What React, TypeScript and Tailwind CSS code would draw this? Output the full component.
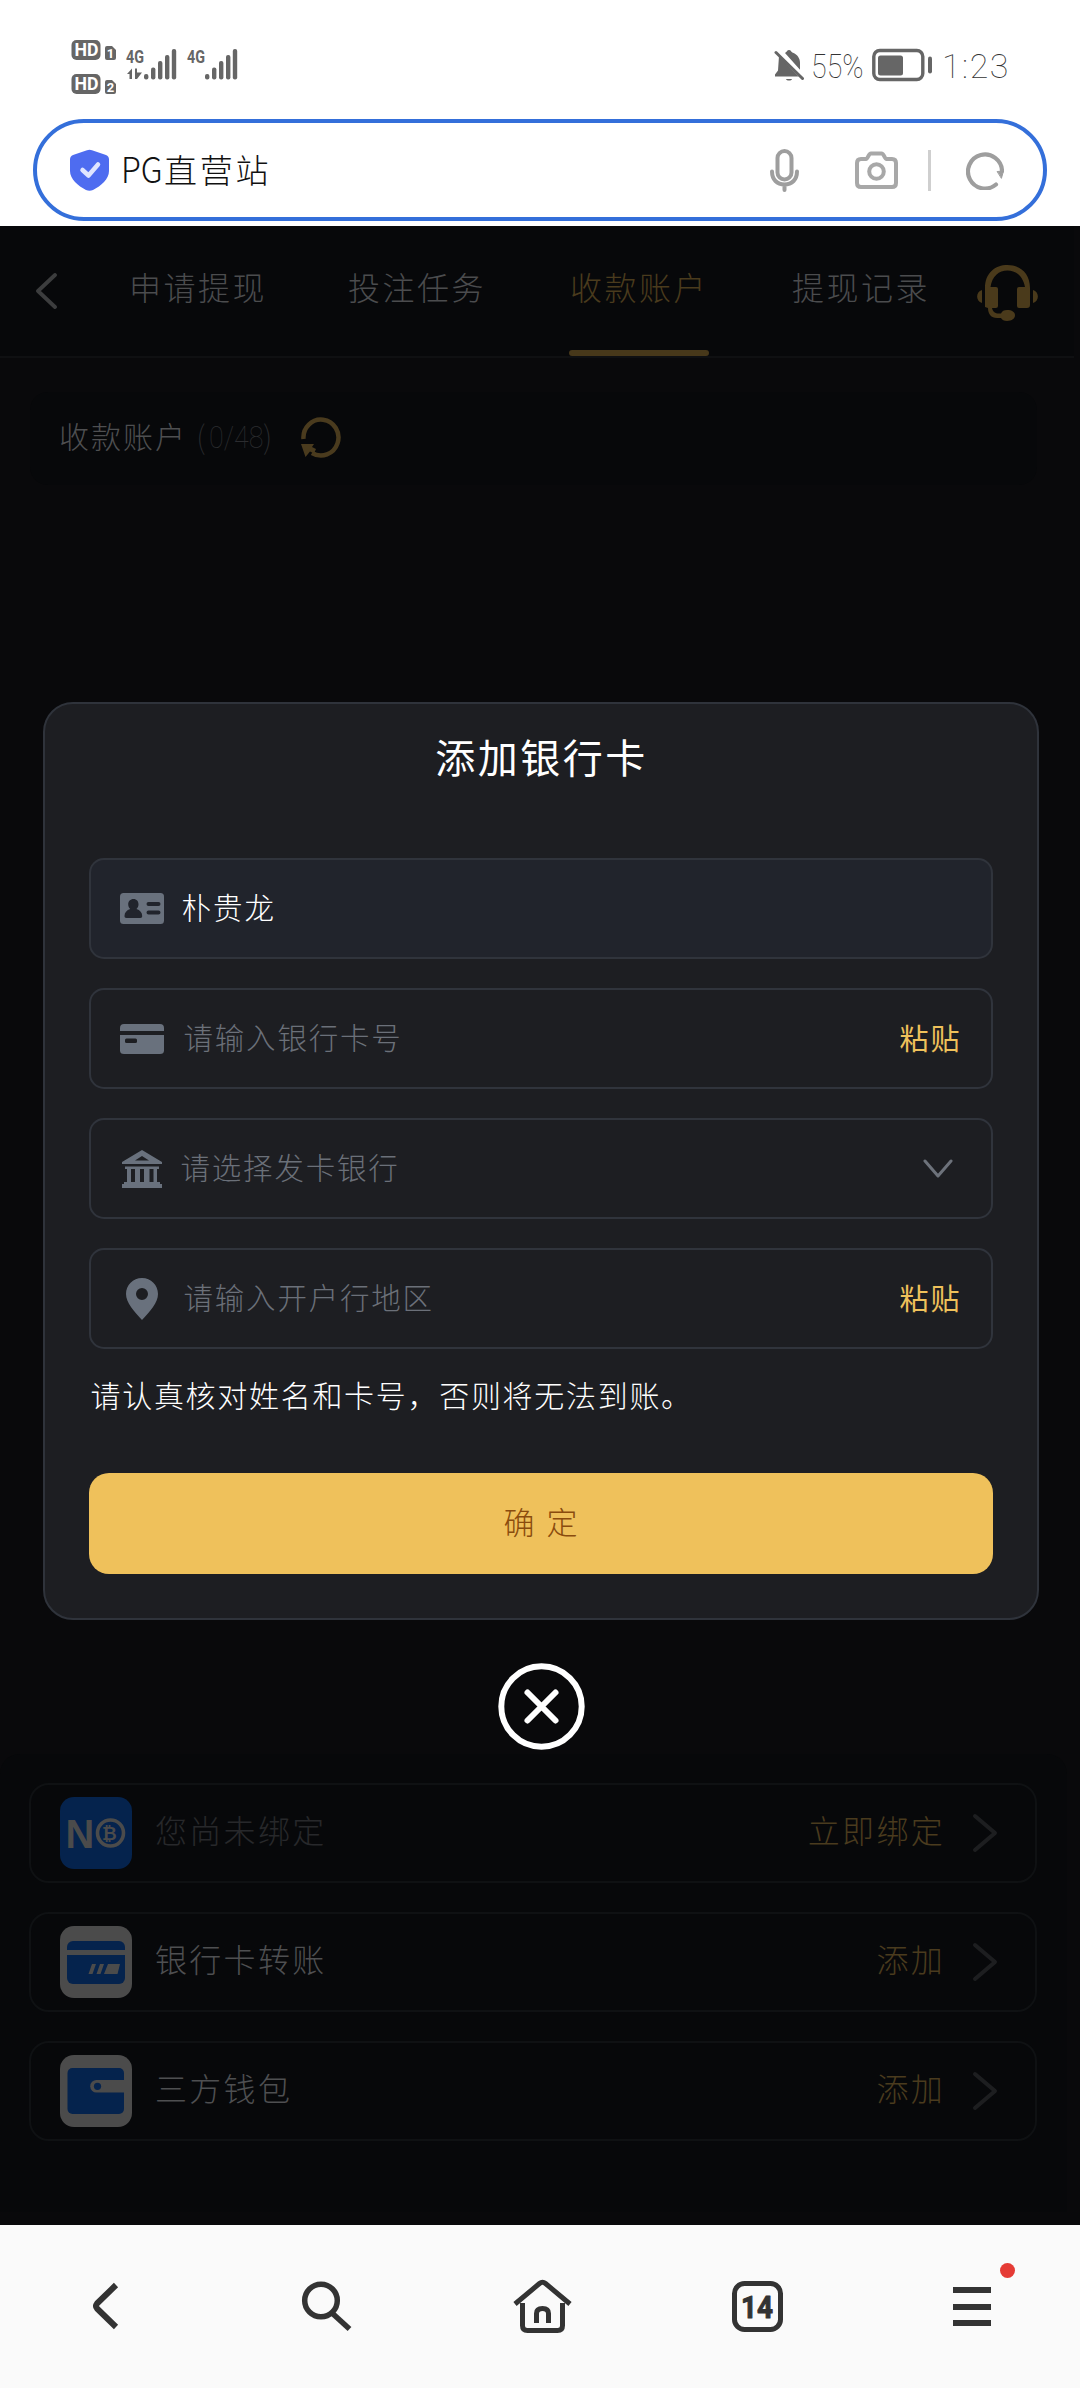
import React from "react";

function Signal({ arrows }: { arrows?: boolean }) {
  return (
    <div className="flex h-[32px] w-[49px] items-end justify-end">
      <svg width="49" height="31" viewBox="0 0 49 31" fill="#666" className="overflow-visible">
        <text x="-1" y="14" fontSize="19" fontWeight="700" textLength="18" lengthAdjust="spacingAndGlyphs" fontFamily="Roboto, sans-serif">4G</text>
        {arrows && <path d="M0 25l5-5.500V30H2.500V25zM8 19.500h2v4l5 0-5 6.500H8z" />}
        <rect x="17" y="25" width="4.400" height="5.500" rx="2" />
        <rect x="24" y="18.500" width="4.400" height="12" rx="2" />
        <rect x="31" y="12" width="4.400" height="18.500" rx="2" />
        <rect x="38" y="6" width="4.400" height="24.500" rx="2" />
        <rect x="44.800" y="0" width="4.400" height="30.500" rx="2" />
      </svg>
    </div>
  );
}

function HdBadge({ n }: { n: string }) {
  return (
    <svg width="45" height="20" viewBox="0 0 45 20">
      <rect x="0.500" y="0" width="29" height="20" rx="5" fill="#666" />
      <text x="3.500" y="16.200" fontSize="18" fontWeight="700" fill="#fff" textLength="24" lengthAdjust="spacingAndGlyphs" fontFamily="Roboto, sans-serif">HD</text>
      <path d="M34 8a2 2 0 012-2h5l4 4v8a2 2 0 01-2 2h-7a2 2 0 01-2-2z" fill="#666" />
      <text x="39.600" y="18" fontSize="13" fontWeight="700" fill="#fff" textAnchor="middle" fontFamily="Roboto, sans-serif">{n}</text>
    </svg>
  );
}

function StatusBar() {
  return (
    <div className="flex h-[119px] items-start px-[71px]">
      <div className="mt-[40px] flex flex-col gap-[14px]">
        <HdBadge n="1" />
        <HdBadge n="2" />
      </div>
      <div className="mt-[48px] ml-[11px] flex gap-[12px]">
        <Signal arrows />
        <Signal />
      </div>
      <div className="mt-[48px] ml-auto flex h-[34px] items-center font-[Roboto] text-[34px] leading-none font-thin text-[#333]">
        <svg width="30" height="32" viewBox="0 0 30 32" fill="#666">
          <path d="M11 4c1-.700 1.500-1 2-2 1-1.500 3-1.500 4 0 .500 1 1 1.300 2 1.700 4.500 2 7 5.500 7 10v7zM5 7l19.500 20.500H1v-2l3-4z" />
          <path d="M2 3.500L28.500 29.500" stroke="#666" strokeWidth="3" strokeLinecap="round" />
          <path d="M12 30h6c-.500 2-5.500 2-6 0z" />
        </svg>
        <span className="ml-[7px] inline-block w-[56px] origin-left scale-x-[0.84] pt-[1px] whitespace-nowrap">55%</span>
        <svg className="ml-[5px]" width="61" height="34" viewBox="0 0 61 34" fill="#666">
          <rect x="1.800" y="2.500" width="49" height="29" rx="6" fill="none" stroke="#666" strokeWidth="3.400" />
          <rect x="6" y="7.500" width="25" height="20" rx="2.500" />
          <rect x="56" y="8.500" width="4" height="17" rx="2" />
        </svg>
        <span className="ml-[9px] inline-block w-[67px] pt-[1px] tracking-[1.500px] whitespace-nowrap">1:23</span>
      </div>
    </div>
  );
}

function AddressBar() {
  return (
    <div className="mx-[33px] flex h-[102px] items-center rounded-full border-4 border-[#346fda] pl-[33px]">
      <svg width="39" height="42" viewBox="0 0 39 42">
        <path d="M17 1.200q2.500-1 5 0L36 6q3 1.200 3 4.500V22c0 8-8 15-16 19q-3.500 1.500-7 0C8 37 0 30 0 22V10.500Q0 7.200 3 6z" fill="#4e6cf0" />
        <path d="M12.500 21l6 5.500 9.500-11" fill="none" stroke="#dfe5ff" strokeWidth="4.500" strokeLinecap="round" strokeLinejoin="round" />
      </svg>
      <span className="ml-[12px] pb-[6px] text-[33px] leading-none tracking-[2.800px] text-[#111]">
        <span className="inline-block w-[43px] text-[36px] tracking-normal"><span className="inline-block origin-left scale-x-[0.9]">PG</span></span>直营站
      </span>
      <svg className="ml-auto" width="29" height="43" viewBox="0 0 29 43" fill="none" stroke="#9e9e9e" strokeWidth="4" strokeLinecap="round">
        <rect x="7.500" y="2" width="14" height="28.500" rx="7" />
        <path d="M2 22.500c0 8 5 13 12.500 13S27 30.500 27 22.500M14.500 36v5" />
      </svg>
      <svg className="ml-[56px]" width="43" height="38" viewBox="0 0 43 38" fill="none" stroke="#a8a8a8" strokeWidth="4" strokeLinejoin="round">
        <path d="M6 8h5c2 0 2.500-5.500 5-5.500h10.500c2.500 0 3 5.500 5 5.500H37q4 0 4 4v20q0 4-4 4H6q-4 0-4-4V12q0-4 4-4z" />
        <circle cx="21.500" cy="20.500" r="7.300" />
      </svg>
      <div className="ml-[30px] h-[41px] w-[3px] bg-[#cfcfcf]" />
      <svg className="mr-[39px] ml-[35px]" width="38" height="39" viewBox="0 0 38 39" fill="none" stroke="#9e9e9e" strokeWidth="4.200" strokeLinecap="round">
        <path d="M30 33.500A17 17 0 1136 20" />
        <path d="M31.500 20.500l6-.500-2 7z" fill="#9e9e9e" strokeWidth="1" />
      </svg>
    </div>
  );
}

function TabHeader() {
  return (
    <div className="flex h-[132px] w-[1074px] items-start border-b-2 border-[#0f1012] bg-[#07080a] text-[32px] leading-none tracking-[2.500px] text-[#4b4c4e]">
      <svg className="mt-[47px] ml-[35px]" width="23" height="36" viewBox="0 0 23 36" fill="none" stroke="#3c3d3e" strokeWidth="3.800" strokeLinecap="round" strokeLinejoin="round">
        <path d="M20 2L3 18l17 16" />
      </svg>
      <span className="mt-[44px] ml-[71px] w-[140px]">申请提现</span>
      <span className="mt-[44px] ml-[79px] w-[140px]">投注任务</span>
      <div className="ml-[81px] flex h-[130px] w-[140px] flex-col items-start justify-between text-[#4a3b1d]">
        <span className="mt-[44px] pl-[1px]">收款账户</span>
        <div className="h-[6px] w-full rounded-full bg-[#47381a]" />
      </div>
      <span className="mt-[44px] ml-[83px] w-[140px]">提现记录</span>
      <svg className="mt-[39px] ml-[45px]" width="62" height="56" viewBox="0 0 62 56" fill="#4a3a1b">
        <path d="M8 42V23C8 8 18 0 30.500 0S53 8 53 23v17q0 3-3 3H42q-2 0-2-2V24q0-2 2-2h6C46 11 39 5.500 30.500 5.500S15 11 13.500 22H19q2 0 2 2v17q0 2-2 2h-4c1 4 3 5.500 7 5.500h2c1-2.500 3-3.500 6-3.500 5 0 8 2 8 5.300S35 56 30 56c-3 0-5-1-6-3h-4C14 53 11 49 11 43z" />
        <path d="M5 25v13C-1.500 36-1.500 27 5 25zM56 25v13c6.500-2 6.500-11 0-13z" />
      </svg>
    </div>
  );
}

function AccountCard() {
  return (
    <div className="mt-[34px] ml-[30px] flex h-[93px] w-[1007px] items-center rounded-[18px] bg-[#07080a] pb-[4px] pl-[29px] leading-none">
      <span className="w-[130px] pb-[4px] text-[30px] tracking-[2px] whitespace-nowrap text-[#4e4f51]">收款账户</span>
      <span className="ml-[7px] flex w-[79px] items-center text-[32px] whitespace-nowrap text-[#2b2c2f]">
        <span className="w-[13px] pb-[4px] font-thin">(</span>
        <span className="w-[54px] origin-left scale-x-[0.84] font-[Roboto] font-thin">0/48</span>
        <span className="w-[12px] pb-[4px] font-thin">)</span>
      </span>
      <svg className="ml-[25px]" width="42" height="44" viewBox="0 0 42 44">
        <path d="M3.500 24A17.500 18 0 1112 38" fill="none" stroke="#4a3b1e" strokeWidth="4.500" />
        <path d="M1 29h13l-2 3 4 2-2 4.500-4-2L5.500 42z" fill="#4a3b1e" />
      </svg>
    </div>
  );
}

function CoinLogo() {
  return (
    <svg width="72" height="72" viewBox="0 0 72 72">
      <rect width="72" height="72" rx="14" fill="#05234d" />
      <text x="5.500" y="51" fontSize="41" fontWeight="700" fill="#4b4b4b" textLength="31" lengthAdjust="spacingAndGlyphs" fontFamily="'Liberation Sans', sans-serif">N</text>
      <circle cx="50.500" cy="36" r="13" fill="#05234d" stroke="#4b4b4b" strokeWidth="3.600" />
      <text x="50.500" y="42.500" fontSize="18" fontWeight="700" fill="#4b4b4b" textAnchor="middle" fontFamily="'DejaVu Sans', sans-serif">₿</text>
    </svg>
  );
}

function CardLogo() {
  return (
    <svg width="72" height="72" viewBox="0 0 72 72">
      <rect width="72" height="72" rx="14" fill="#4b4b4b" />
      <rect x="7" y="15" width="58" height="43" rx="6" fill="#05234d" />
      <path d="M7 24h58v5H7zM32 38h4l-3.500 10h-4zM40 38h4l-3.500 10h-4zM48 38h12l-2.500 10H44z" fill="#4b4b4b" />
    </svg>
  );
}

function WalletLogo() {
  return (
    <svg width="72" height="72" viewBox="0 0 72 72">
      <rect width="72" height="72" rx="14" fill="#4b4b4b" />
      <rect x="7.500" y="13" width="56.500" height="46" rx="5" fill="#05234d" />
      <path d="M64 25H36.500a6.300 6.300 0 000 12.600H64z" fill="#4b4b4b" />
      <circle cx="37.500" cy="31.300" r="3.600" fill="#05234d" />
    </svg>
  );
}

function MethodRow({ logo, label, action, muted }: { logo: React.ReactNode; label: string; action: string; muted?: boolean }) {
  return (
    <div className="flex h-[100px] items-center rounded-[20px] border-2 border-[#0f1113] pr-[37px] pl-[29px] text-[32px] leading-none tracking-[2.300px]">
      {logo}
      <span className={muted ? "ml-[23px] pb-[8px] text-[#27282b]" : "ml-[23px] pb-[8px] text-[#4e4f51]"}>{label}</span>
      <span className="ml-auto pb-[8px] text-[#4a3b1e]">{action}</span>
      <svg className="ml-[27px]" width="26" height="40" viewBox="0 0 26 40" fill="none" stroke="#1d1e20" strokeWidth="4" strokeLinecap="round" strokeLinejoin="round">
        <path d="M3 3l20 17L3 37" />
      </svg>
    </div>
  );
}

function IdIcon() {
  return (
    <svg width="44" height="31" viewBox="0 0 44 31">
      <rect width="44" height="31" rx="3.500" fill="#69717d" />
      <path d="M13.500 6c3.200 0 5 2.300 5 5.200 0 2-.800 3.500-2 4.800 3.500 1.200 5.700 3.500 5.700 7 0 1.200-.500 2-2 2H6.500c-1.500 0-2-.800-2-2 0-3.500 2.200-5.800 5.700-7-1.200-1.300-2-2.800-2-4.800C8.200 8.300 10.300 6 13.500 6z" fill="#21242c" />
      <path d="M28.500 11h10M28.500 19.500h10" stroke="#21242c" strokeWidth="4" strokeLinecap="round" />
    </svg>
  );
}

function BankCardIcon() {
  return (
    <svg width="44" height="30" viewBox="0 0 44 30">
      <path d="M4 0h36q4 0 4 4v3H0V4Q0 0 4 0zM0 11h44v15.500q0 3.500-4 3.500H4q-4 0-4-3.500z" fill="#69717d" />
      <rect x="5" y="14.500" width="12" height="4.500" rx="1.500" fill="#1d1e22" />
    </svg>
  );
}

function BankIcon() {
  return (
    <svg className="mx-[2px]" width="40" height="38" viewBox="0 0 40 38" fill="#69717d">
      <path fillRule="evenodd" d="M20 0L40 12v2H0v-2zM20 6l-7 4.500h14z" />
      <path d="M3 16.500h34V19h-2v13h3v2h2v4H0v-4h2v-2h3V19H3z" />
      <path d="M9 19h4v13H9zM18 19h4v13h-4zM27.500 19h4v13h-4z" fill="#1d1e22" />
    </svg>
  );
}

function PinIcon() {
  return (
    <svg className="mx-[6px]" width="32" height="42" viewBox="0 0 32 42" fill="#69717d">
      <path fillRule="evenodd" d="M16 0c9 0 16 7 16 16 0 9-8 17-16 26C8 33 0 25 0 16 0 7 7 0 16 0zm0 10a6 6 0 100 12 6 6 0 000-12z" />
    </svg>
  );
}

function Field({ icon, value, placeholder, right, inset }: { icon: React.ReactNode; value?: string; placeholder?: string; right?: React.ReactNode; inset?: boolean }) {
  return (
    <div className={value ? "flex h-[101px] items-center rounded-[15px] border-2 border-[#30343c] bg-[#21242c] pr-[32px] pl-[29px] text-[29.500px] leading-none tracking-[2px]" : "flex h-[101px] items-center rounded-[15px] border-2 border-[#30343c] pr-[32px] pl-[29px] text-[29.500px] leading-none tracking-[1.800px]"}>
      {icon}
      {value ? (
        <span className="ml-[18px] pb-[4px] text-white">{value}</span>
      ) : (
        <span className={inset ? "ml-[17px] pb-[4px] text-[#6b7079]" : "ml-[20px] pb-[4px] text-[#6b7079]"}>{placeholder}</span>
      )}
      <div className="ml-auto text-[#efc15b]">{right}</div>
    </div>
  );
}

function PasteButton() {
  return <button className="-mr-[3px] block pb-[3px] text-[29px] leading-none font-normal tracking-[2px]">粘贴</button>;
}

function BankCardDialog() {
  return (
    <div className="absolute inset-x-0 top-[476px] flex flex-col items-center">
      <div className="mr-[1px] ml-[2px] h-[918px] w-[996px] rounded-[30px] border-2 border-[#2f333b] bg-[#1d1e22] px-[44px]">
        <h2 className="pt-[32px] pl-[2px] text-center text-[40px] leading-none font-normal tracking-[2.500px] text-white">添加银行卡</h2>
        <div className="mt-[82px] flex flex-col gap-[29px]">
          <Field icon={<IdIcon />} value="朴贵龙" />
          <Field icon={<BankCardIcon />} placeholder="请输入银行卡号" right={<PasteButton />} />
          <Field
            icon={<BankIcon />}
            inset
            placeholder="请选择发卡银行"
            right={
              <svg className="mr-[5px]" width="32" height="20" viewBox="0 0 32 20" fill="none" stroke="#6d727b" strokeWidth="3" strokeLinecap="round" strokeLinejoin="round">
                <path d="M3 2l13 15L29 2" />
              </svg>
            }
          />
          <Field icon={<PinIcon />} placeholder="请输入开户行地区" right={<PasteButton />} />
        </div>
        <p className="mt-[29px] pl-[2px] text-[30px] leading-[32px] tracking-[1.700px] text-white">请认真核对姓名和卡号，否则将无法到账。</p>
        <button className="mt-[63px] flex h-[101px] w-full items-center justify-center gap-[12px] rounded-[20px] bg-[#efc15b] pb-[6px] text-[31px] leading-none text-[#8a4c0e]">
          <span>确</span>
          <span>定</span>
        </button>
      </div>
      <svg className="mt-[43px] ml-[2px]" width="87" height="87" viewBox="0 0 87 87" fill="none" stroke="#fff" strokeWidth="6" strokeLinecap="round">
        <circle cx="43.500" cy="43.500" r="40.200" />
        <path d="M29.500 29.500l28 28M57.500 29.500l-28 28" />
      </svg>
    </div>
  );
}

function BottomNav() {
  return (
    <nav className="grid h-[163px] grid-cols-5 bg-[#fafafa]">
      <div className="flex pt-[57px] pl-[92px]">
        <svg width="27" height="48" viewBox="0 0 27 48" fill="none" stroke="#333" strokeWidth="6" strokeLinejoin="round">
          <path d="M24 3L5 21.500q-2 2.500 0 5L24 45" />
        </svg>
      </div>
      <div className="flex pt-[55px] pl-[85px]">
        <svg width="51" height="52" viewBox="0 0 51 52" fill="none" stroke="#333" strokeWidth="5.500">
          <circle cx="20" cy="20.500" r="16.300" />
          <path d="M31 33l17.500 16" />
        </svg>
      </div>
      <div className="flex pt-[54px] pl-[81px]">
        <svg width="59" height="56" viewBox="0 0 59 56" fill="none" stroke="#333" strokeWidth="5">
          <path d="M2 25L26.500 4.500q3-2.500 6 0L57 25" />
          <path d="M9.500 24v22.500q0 5 5 5h30q5 0 5-5V24" />
          <path d="M23.500 44V34.500q0-5 6-5t6 5V44" />
        </svg>
      </div>
      <div className="flex pt-[56px] pl-[84px]">
        <svg width="51" height="51" viewBox="0 0 51 51">
          <rect x="2.500" y="2.500" width="46" height="46" rx="10" fill="none" stroke="#333" strokeWidth="5" />
          <text x="25" y="37" textAnchor="middle" fontSize="31" fontWeight="700" fill="#333" stroke="#333" strokeWidth="1" strokeLinejoin="round" textLength="32" lengthAdjust="spacingAndGlyphs" fontFamily="Roboto, sans-serif">14</text>
        </svg>
      </div>
      <div className="flex pt-[38px] pl-[89px]">
        <div className="relative mt-[24px] flex h-[39px] w-[38px] flex-col justify-between">
          <div className="h-[6px] bg-[#333]" />
          <div className="h-[6px] bg-[#333]" />
          <div className="h-[6px] bg-[#333]" />
          <div className="absolute -top-[24px] left-[47px] size-[15px] rounded-full bg-[#e53b35]" />
        </div>
      </div>
    </nav>
  );
}

export default function App() {
  return (
    <div className="flex h-[2388px] w-[1080px] flex-col overflow-hidden bg-white font-['Noto_Sans_CJK_SC',sans-serif] font-light">
      <StatusBar />
      <AddressBar />
      <main className="relative mt-[5px] flex h-[1999px] flex-col bg-[#09090b]">
        <TabHeader />
        <AccountCard />
        <section className="mt-auto mb-[13px] flex h-[458px] w-[1067px] flex-col gap-[29px] rounded-t-[20px] bg-[#07080a] pt-[29px] pr-[30px] pl-[29px]">
          <MethodRow logo={<CoinLogo />} label="您尚未绑定" action="立即绑定" muted />
          <MethodRow logo={<CardLogo />} label="银行卡转账" action="添加" />
          <MethodRow logo={<WalletLogo />} label="三方钱包" action="添加" />
        </section>
        <BankCardDialog />
      </main>
      <BottomNav />
    </div>
  );
}
